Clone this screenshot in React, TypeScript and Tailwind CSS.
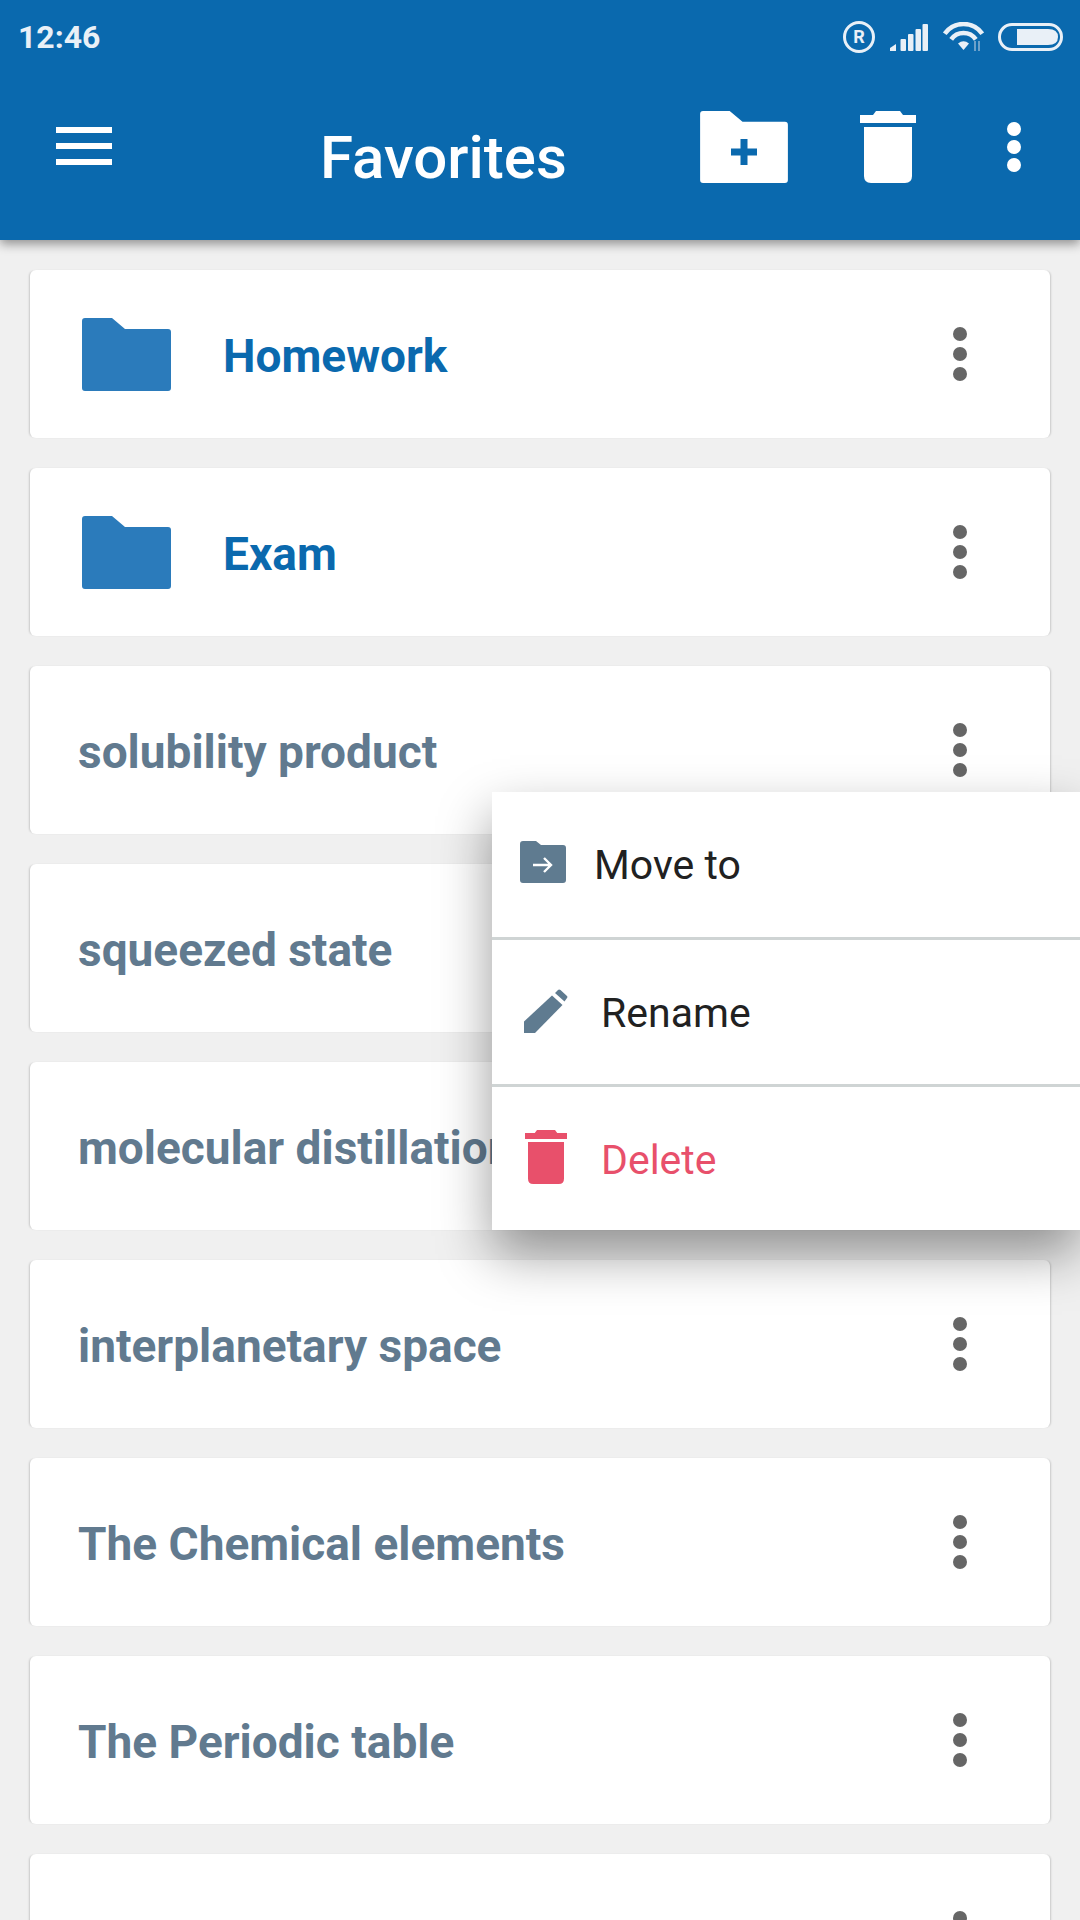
import type { ReactNode } from "react";

const notes = [
  "solubility product",
  "squeezed state",
  "molecular distillation",
  "interplanetary space",
  "The Chemical elements",
  "The Periodic table",
  "",
];

function FolderShape({ className }: { className: string }) {
  return (
    <svg viewBox="0 0 89 73" className={className} fill="currentColor">
      <path d="M3 0H30L43 11H86Q89 11 89 14V70Q89 73 86 73H3Q0 73 0 70V3Q0 0 3 0Z" />
    </svg>
  );
}

function TrashIcon({ className }: { className: string }) {
  return (
    <svg viewBox="0 0 56 72" className={className} fill="currentColor">
      <path d="M13 4L16 0H40L43 4H56V12H0V4Z" />
      <path d="M4 16H52V65Q52 72 45 72H11Q4 72 4 65Z" />
    </svg>
  );
}

function Dots({ className }: { className: string }) {
  return (
    <div className={`flex flex-col gap-[6px] ${className}`}>
      <span className="h-[14px] w-[14px] rounded-full bg-current" />
      <span className="h-[14px] w-[14px] rounded-full bg-current" />
      <span className="h-[14px] w-[14px] rounded-full bg-current" />
    </div>
  );
}

function StatusBar() {
  return (
    <div className="flex h-[72px] items-center pl-[18px] pt-[2px] text-[#e9f0f7]">
      <span className="text-[32px] font-bold">12:46</span>
      <div className="ml-auto mr-[17px] flex items-center">
        <div className="flex h-[32px] w-[32px] items-center justify-center rounded-full border-[3px] border-current text-[18px] font-bold leading-none">
          R
        </div>
        <svg viewBox="0 0 38 27" className="ml-[15px] h-[27px] w-[38px]" fill="currentColor">
          <path d="M0 27V24L6 20V27Z" />
          <rect x="10.5" y="15" width="5.5" height="12" rx="1" />
          <rect x="18" y="10" width="5.5" height="17" rx="1" />
          <rect x="25.5" y="5" width="5.5" height="22" rx="1" />
          <rect x="32.5" y="0" width="5.5" height="27" rx="1" />
        </svg>
        <svg viewBox="0 0 41 30" className="ml-[15px] h-[30px] w-[41px]" fill="none" stroke="currentColor" strokeWidth="4.6">
          <path d="M1.7 11.8A23 23 0 0 1 39.3 11.8" />
          <path d="M8.2 17.4A15 15 0 0 1 32.8 17.4" />
          <path d="M15 21.5Q20.5 17 26 21.5L20.5 28Z" fill="currentColor" stroke="none" />
          <path d="M32 19V29M36 19V29" stroke="#8fb4d4" strokeWidth="1.5" />
        </svg>
        <svg viewBox="0 0 65 28" className="ml-[14px] h-[28px] w-[65px]" fill="currentColor">
          <rect x="1.5" y="1.5" width="62" height="25" rx="12.5" fill="none" stroke="currentColor" strokeWidth="3" />
          <path d="M19 6H50Q60 6 60 14Q60 22 50 22H19Z" />
        </svg>
      </div>
    </div>
  );
}

function Toolbar() {
  return (
    <div className="flex h-[168px] items-start text-white">
      <div className="ml-[56px] mt-[55px] flex w-[56px] flex-col gap-[10px]">
        <span className="h-[6px] bg-white" />
        <span className="h-[6px] bg-white" />
        <span className="h-[6px] bg-white" />
      </div>
      <h1 className="ml-[208px] mt-[50px] text-[60px] font-medium leading-[72px]">Favorites</h1>
      <div className="relative ml-auto mt-[39px] h-[72px] w-[88px]">
        <FolderShape className="h-[72px] w-[88px]" />
        <svg viewBox="0 0 26 26" className="absolute left-[31px] top-[28px] h-[26px] w-[26px]" fill="#0a69ae">
          <path d="M9.5 0H16.5V9.5H26V16.5H16.5V26H9.5V16.5H0V9.5H9.5Z" />
        </svg>
      </div>
      <TrashIcon className="ml-[72px] mt-[39px] h-[72px] w-[56px]" />
      <Dots className="ml-[91px] mr-[59px] mt-[50px] !gap-[4px]" />
    </div>
  );
}

function Card({ children }: { children: ReactNode }) {
  return (
    <div className="ml-[30px] flex h-[168px] w-[1020px] shrink-0 items-center rounded-[6px] bg-white shadow-[-2px_0_2px_-1px_rgba(0,0,0,0.16),2px_0_2px_-1px_rgba(0,0,0,0.16)]">
      {children}
      <Dots className="ml-auto mr-[83px] text-[#666666]" />
    </div>
  );
}

function FolderRow({ name }: { name: string }) {
  return (
    <Card>
      <FolderShape className="ml-[52px] h-[73px] w-[89px] text-[#2b7bbb]" />
      <span className="ml-[52px] mt-[5px] text-[46px] font-bold text-[#0a69ae]">{name}</span>
    </Card>
  );
}

function NoteRow({ name }: { name: string }) {
  return (
    <Card>
      <span className="ml-[48px] mt-[5px] whitespace-nowrap text-[46px] font-bold text-[#617a8f]">{name}</span>
    </Card>
  );
}

function ContextMenu() {
  return (
    <div className="absolute left-[492px] top-[792px] flex h-[438px] w-[588px] flex-col bg-white shadow-[0_24px_50px_rgba(0,0,0,0.4)]">
      <div className="flex h-[145px] items-center pb-[5px] pl-[28px] text-[#212121]">
        <div className="relative h-[42px] w-[46px] text-[#5f7b90]">
          <svg viewBox="0 0 46 42" className="h-[42px] w-[46px]" fill="currentColor">
            <path d="M3 0H16L21 4H43Q46 4 46 7V39Q46 42 43 42H3Q0 42 0 39V3Q0 0 3 0Z" />
            <path d="M13 24H31M24 17L31 24L24 31" fill="none" stroke="#ffffff" strokeWidth="2.4" />
          </svg>
        </div>
        <span className="ml-[28px] mt-[7px] text-[41px]">Move to</span>
      </div>
      <div className="flex h-[147px] items-center border-t-[3px] border-[#cfd4d4] pb-[2px] pl-[32px] text-[#212121]">
        <svg viewBox="0 0 44 44" className="h-[44px] w-[44px]" fill="#5f7b90">
          <path d="M0 44V32.5L28 6.5L38.5 16L11 44Z" />
          <path d="M31 4L34 1Q35 0 36.5 1L43 7Q44 8 43 9L40.5 12.5Z" />
        </svg>
        <span className="ml-[33px] mt-[6px] text-[41px]">Rename</span>
      </div>
      <div className="flex h-[146px] items-center border-t-[3px] border-[#cfd4d4] pb-[4px] pl-[33px] text-[#e8506b]">
        <TrashIcon className="h-[54px] w-[42px]" />
        <span className="ml-[34px] mt-[8px] text-[41px]">Delete</span>
      </div>
    </div>
  );
}

export default function App() {
  return (
    <div className="relative flex h-[1920px] w-[1080px] flex-col overflow-hidden bg-[#f0f0f0] font-['Roboto',sans-serif]">
      <header className="relative z-10 h-[240px] shrink-0 bg-[#0a69ae] shadow-[0_4px_10px_rgba(0,0,0,0.4)]">
        <StatusBar />
        <Toolbar />
      </header>
      <div className="flex flex-col gap-[30px] pt-[30px]">
        <FolderRow name="Homework" />
        <FolderRow name="Exam" />
        {notes.map((name, i) => (
          <NoteRow key={i} name={name} />
        ))}
      </div>
      <ContextMenu />
    </div>
  );
}
